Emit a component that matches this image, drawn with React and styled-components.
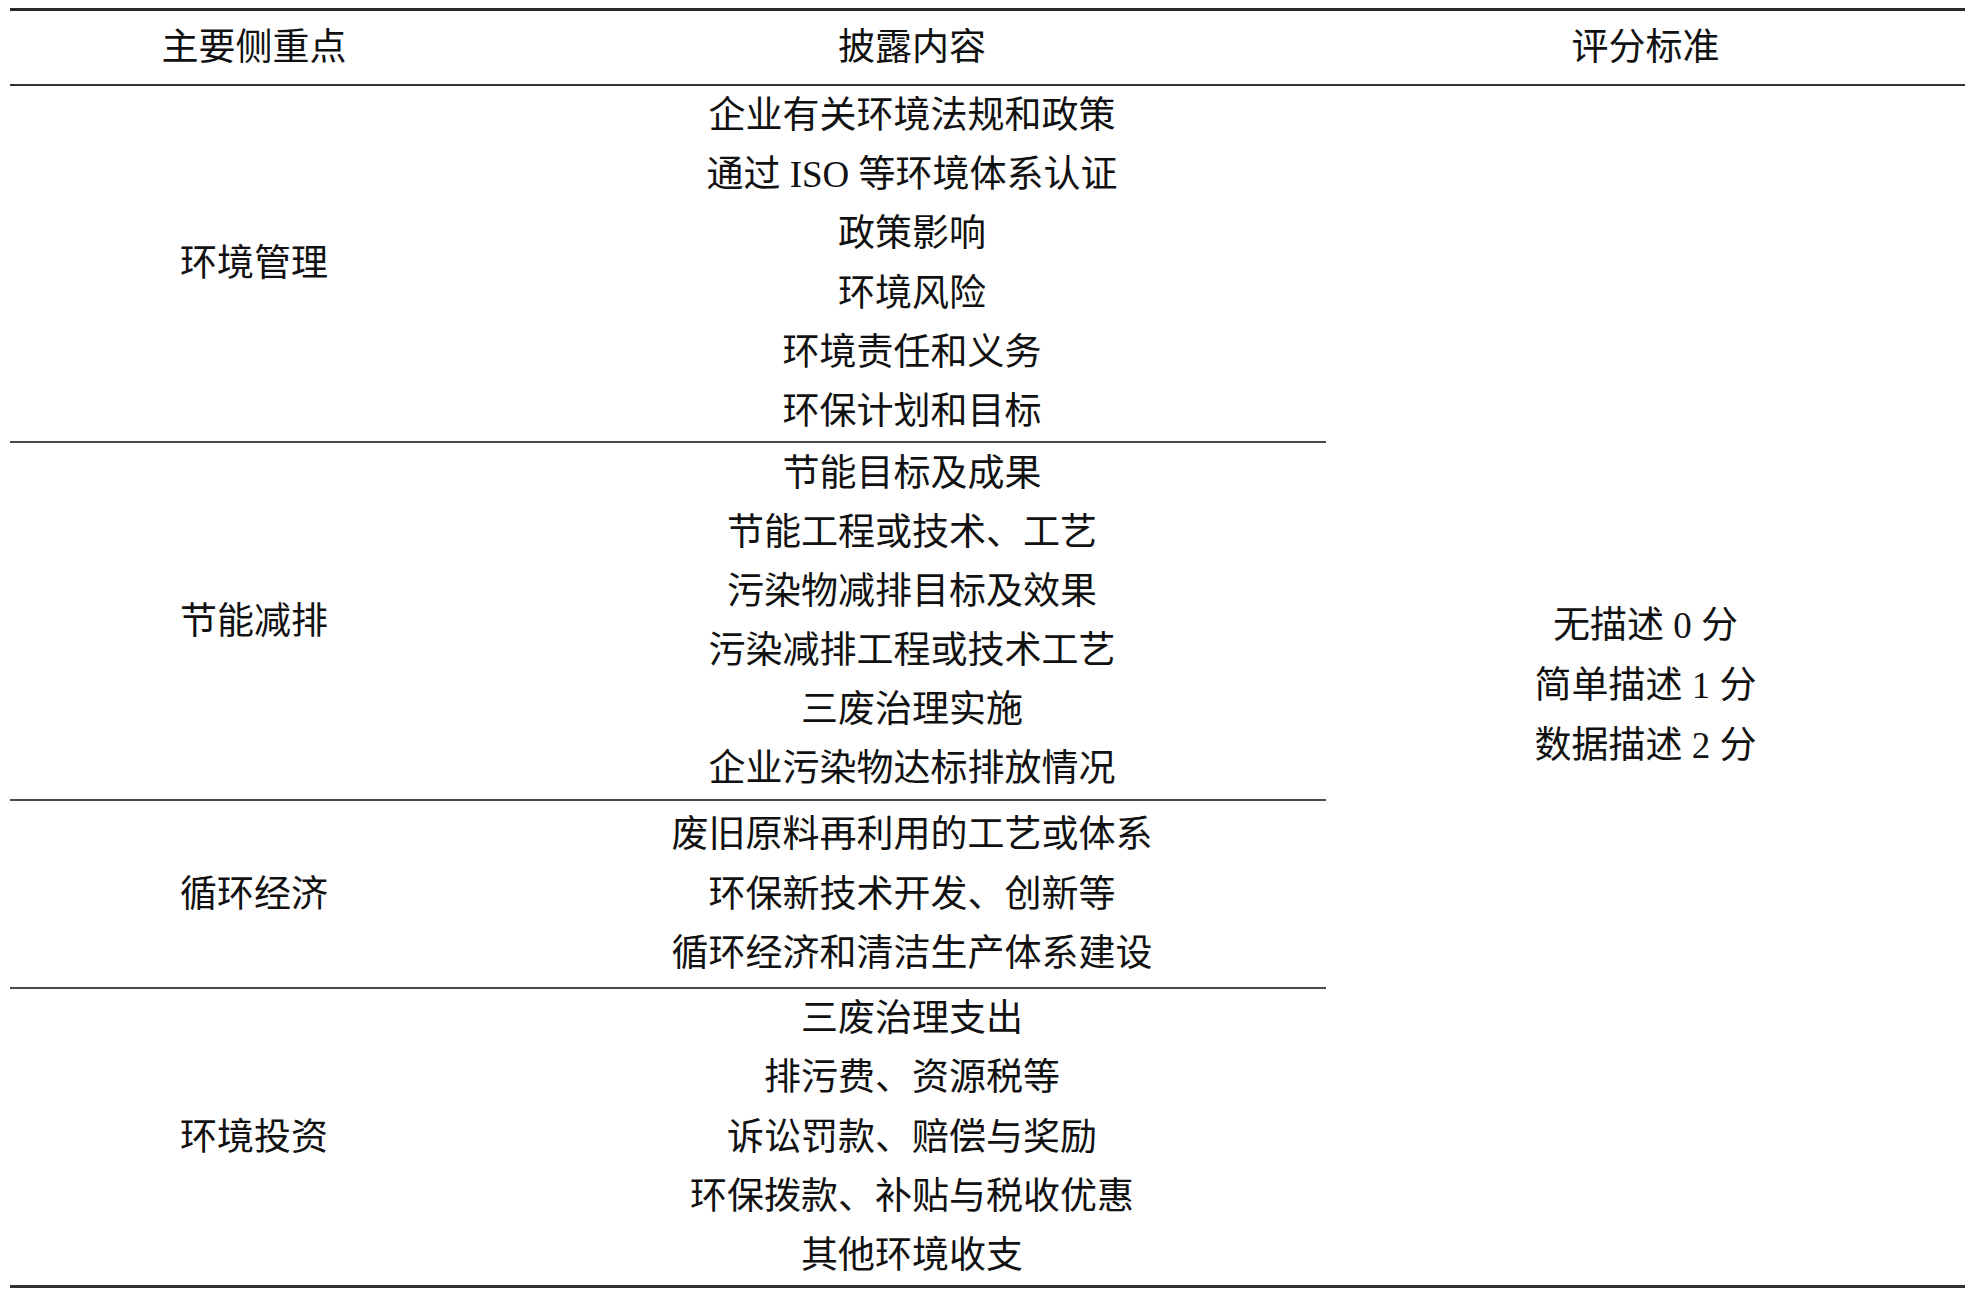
import styled, { createGlobalStyle } from "styled-components"

const GlobalStyle = createGlobalStyle`
  *{
    box-sizing: border-box;
  }
  html, body{
    margin: 0;
    background: #ffffff;
  }
  body{
    font-family: "Liberation Serif", "Noto Sans CJK SC", serif;
    font-weight: 400;
    color: #111111;
  }
`

const groups = [
    {
        topic: "环境管理",
        height: 357,
        items: ["企业有关环境法规和政策", "通过 ISO 等环境体系认证", "政策影响", "环境风险", "环境责任和义务", "环保计划和目标"]
    },
    {
        topic: "节能减排",
        height: 358,
        items: ["节能目标及成果", "节能工程或技术、工艺", "污染物减排目标及效果", "污染减排工程或技术工艺", "三废治理实施", "企业污染物达标排放情况"]
    },
    {
        topic: "循环经济",
        height: 188,
        items: ["废旧原料再利用的工艺或体系", "环保新技术开发、创新等", "循环经济和清洁生产体系建设"]
    },
    {
        topic: "环境投资",
        height: 296,
        items: ["三废治理支出", "排污费、资源税等", "诉讼罚款、赔偿与奖励", "环保拨款、补贴与税收优惠", "其他环境收支"]
    }
]

const scores = ["无描述 0 分", "简单描述 1 分", "数据描述 2 分"]

export default function App(){
    return(
        <>
            <GlobalStyle/>
            <Page>
                <Table>
                    <HeadRow>
                        <Cell>主要侧重点</Cell>
                        <Cell>披露内容</Cell>
                        <Cell>评分标准</Cell>
                    </HeadRow>
                    <Body>
                        <Groups>
                            {groups.map((g, i) =>
                                <Group key={g.topic} $h={g.height} $last={i === groups.length - 1}>
                                    <Cell>{g.topic}</Cell>
                                    <Items>
                                        {g.items.map(item => <Item key={item}>{item}</Item>)}
                                    </Items>
                                </Group>
                            )}
                        </Groups>
                        <Scores>
                            {scores.map(s => <Score key={s}>{s}</Score>)}
                        </Scores>
                    </Body>
                </Table>
            </Page>
        </>
    )
}

const Page = styled.div`
    padding: 8px 0 0 10px;
`

const Table = styled.div`
    width: 1955px;
    border-top: 3px solid #2a2a2a;
    border-bottom: 3px solid #333333;
    font-size: 37px;
    line-height: 1;
`

const HeadRow = styled.div`
    display: grid;
    grid-template-columns: 488px 828px 1fr;
    height: 75px;
    border-bottom: 2px solid #333333;
`

const Cell = styled.div`
    display: flex;
    align-items: center;
    justify-content: center;
    white-space: nowrap;
`

const Body = styled.div`
    display: grid;
    grid-template-columns: 1316px 1fr;
`

const Groups = styled.div`
    display: flex;
    flex-direction: column;
`

const Group = styled.div`
    display: grid;
    grid-template-columns: 488px 828px;
    height: ${p => p.$h}px;
    border-bottom: ${p => p.$last ? "none" : "2px solid #4a4a4a"};
`

const Items = styled.div`
    display: flex;
    flex-direction: column;
    justify-content: center;
`

const Item = styled.div`
    height: 59.2px;
    display: flex;
    align-items: center;
    justify-content: center;
    white-space: nowrap;
`

const Scores = styled.div`
    display: flex;
    flex-direction: column;
    justify-content: center;
    align-items: center;
`

const Score = styled.div`
    height: 60px;
    display: flex;
    align-items: center;
    white-space: nowrap;
`
